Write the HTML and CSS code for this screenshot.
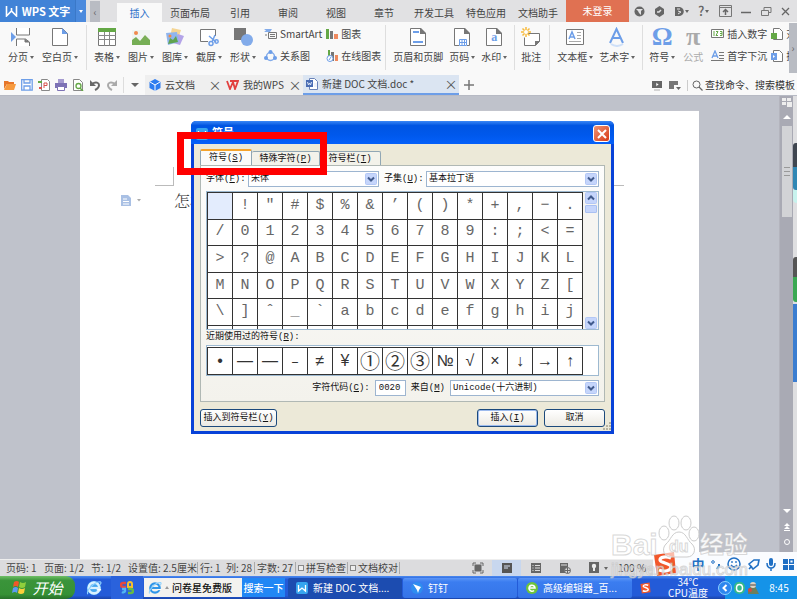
FILE: index.html
```
<!DOCTYPE html>
<html lang="zh-CN">
<head>
<meta charset="utf-8">
<title>WPS 文字</title>
<link rel="stylesheet" href="styles.css">
</head>
<body>
<svg width="0" height="0" class="defs" aria-hidden="true">
  <symbol id="page" viewBox="0 0 18 20"><path d="M1.500 1.500h10l5 5v12h-15z" fill="#fff" stroke="#777"/><path d="M11 1h1l5 5v1h-6z" fill="#777"/></symbol>
  <symbol id="wlogo" viewBox="0 0 12 12"><path d="M1 1v10l5-5 5 5V1M6 3v3" fill="none" stroke="#fff" stroke-width="1.600"/></symbol>
  <symbol id="chev" viewBox="0 0 12 12"><rect x=".5" y=".5" width="11" height="11" rx="1" fill="#c5d5fb" stroke="#b3c7f5"/><path d="M3 4.500l3 3 3-3" fill="none" stroke="#405a8c" stroke-width="2"/></symbol>
  <symbol id="ie" viewBox="0 0 18 18"><circle cx="9" cy="9" r="6" fill="none" stroke="currentColor" stroke-width="3"/><path d="M4 9h11" stroke="currentColor" stroke-width="2.500"/><path d="M12 11h5" stroke="#fff" stroke-width="1.500"/><path d="M2 16C0 12 9 2 16 2c2 1 0 3-1 4" fill="none" stroke="#8ed2ff" stroke-width="1.300"/></symbol>
  <symbol id="sogou" viewBox="0 0 24 24"><path d="M1 3l20-3 2 21-19 3z" fill="#f2572b"/><path d="M18 6C13 4 7 5 7 8s11 3 11 7-7 5-12 3" fill="none" stroke="#fff" stroke-width="3.200"/></symbol>
</svg>
<div class="app">
  <header class="titlebar">
    <button class="brand"><svg width="13" height="12"><use href="#wlogo"/></svg><b>WPS 文字</b></button>
    <button class="brand-more" aria-label="菜单"><i class="caret"></i></button>
    <button class="tabs-back" aria-label="向左">‹</button>
    <nav class="tabs">
      <a href="#" class="active">插入</a><a href="#" class="wide">页面布局</a><a href="#">引用</a><a href="#">审阅</a><a href="#">视图</a><a href="#">章节</a><a href="#" class="wide">开发工具</a><a href="#" class="wide">特色应用</a><a href="#" class="wide">文档助手</a>
    </nav>
    <button class="login">未登录</button>
    <div class="winbtns">
      <button aria-label="皮肤"><svg width="11" height="11" viewBox="0 0 11 11"><circle cx="5.500" cy="5.500" r="5" fill="#666"/><path d="M2 3h7L7 5v4L5 7 4 5z" fill="#e1e1e3"/></svg></button>
      <button aria-label="设置"><svg width="11" height="11" viewBox="0 0 11 11"><path d="M5.500 0l4.500 3v5l-4.500 3L1 8V3z" fill="#666"/><path d="M3 6h2l2-2" stroke="#e1e1e3" fill="none" stroke-width="1.500"/></svg></button>
      <button aria-label="文档"><svg width="9" height="11" viewBox="0 0 9 11"><path d="M0 1h5c5 1 5 8 0 9H0z" fill="#666"/><path d="M2 3h3M3 5l3 1-3 2" stroke="#e1e1e3" fill="none"/></svg><i class="caret"></i></button>
      <button class="help" aria-label="帮助">?<i class="caret"></i></button>
      <button aria-label="折叠"><svg width="13" height="12" viewBox="0 0 13 12"><path d="M.5.5h12v11H.5zM1 2.500h11" fill="none" stroke="#777"/><path d="M6.500 10V5M4 7l2.500-2.500L9 7" fill="none" stroke="#666" stroke-width="1.500"/></svg></button>
      <button aria-label="最小化"><svg width="10" height="11" viewBox="0 0 10 11"><path d="M0 6.500h10" stroke="#666" stroke-width="1.500"/></svg></button>
      <button aria-label="还原"><svg width="11" height="11" viewBox="0 0 11 11"><path d="M.5 4.500h7v5h-7zM3 4V1.500h7v5H8" fill="none" stroke="#777"/></svg></button>
      <button aria-label="关闭"><svg width="9" height="11" viewBox="0 0 9 11"><path d="M1 2l7 7M8 2L1 9" stroke="#666" stroke-width="1.300"/></svg></button>
    </div>
  </header>

  <section class="ribbon">
    <div class="group">
      <button class="big"><svg width="20" height="20" viewBox="0 0 20 20"><path d="M5.500 1v7h13V1M5.500 19v-7h9l4 3v4" fill="#fff" stroke="#777"/><path d="M14 12v3h4" fill="#777" stroke="#777"/><path d="M0 5l5 5-5 5z" fill="#6d9ee8"/></svg><span>分页<i class="caret"></i></span></button>
      <button class="big"><svg width="18" height="20" viewBox="0 0 18 20"><path d="M1.500 1.500h10l5 5v12h-15z" fill="#fff" stroke="#777"/><path d="M11 1l6 6h-6z" fill="#6d9ee8"/></svg><span>空白页<i class="caret"></i></span></button>
    </div>
    <div class="group">
      <button class="big"><svg width="20" height="20" viewBox="0 0 20 20"><path d="M1.500 1.500h17v17h-17z" fill="#fff" stroke="#777"/><path d="M1 1h18v4H1z" fill="#64a846"/><path d="M1 8.500h18M1 12.500h18M7.500 5v14M12.500 5v14" stroke="#888"/></svg><span>表格<i class="caret"></i></span></button>
      <button class="big"><svg width="20" height="20" viewBox="0 0 20 20"><path d="M1 3h18v15H1z" fill="#eef5f2"/><circle cx="5" cy="6" r="2" fill="#ef8a4f"/><path d="M1 18v-5l4-3 4 4 5-6 5 5v5z" fill="#76ae55"/></svg><span>图片<i class="caret"></i></span></button>
      <button class="big"><svg width="20" height="20" viewBox="0 0 20 20"><path d="M7 1l9 2-3 9-8-2z" fill="#f4d594"/><path d="M13 7l6 2-4 9-7-2z" fill="#b4a4e8"/><path d="M1 6l11-1 2 10-11 3z" fill="#8fb5ee"/><path d="M3 17l2-6 3 2 3-4 2 6z" fill="#60a34f"/><circle cx="5" cy="9" r="1.500" fill="#f48a42"/></svg><span>图库<i class="caret"></i></span></button>
      <button class="big"><svg width="20" height="20" viewBox="0 0 20 20"><path d="M9 14.500H1.500v-12h15V9" fill="#fff" stroke="#777"/><path d="M10 9l7 6M16 8l-3 7" stroke="#6d9ee8" stroke-width="1.500"/><circle cx="12" cy="16.500" r="2" fill="none" stroke="#6d9ee8" stroke-width="1.500"/><circle cx="17.500" cy="14.500" r="1.700" fill="none" stroke="#6d9ee8" stroke-width="1.500"/></svg><span>截屏<i class="caret"></i></span></button>
      <button class="big"><svg width="20" height="20" viewBox="0 0 20 20"><path d="M1 1h12v12H1z" fill="#777"/><circle cx="14" cy="13" r="6" fill="#82abea"/></svg><span>形状<i class="caret"></i></span></button>
      <div class="pair">
        <button><svg width="13" height="12" viewBox="0 0 13 12"><path d="M0 1h8L6 4H0l2-1.500z" fill="#82abea"/><path d="M4.500 4.500h8v6h-8zM6 6.500h5M6 8.500h5M1 7h2" fill="none" stroke="#777"/></svg>SmartArt</button>
        <button><svg width="13" height="12" viewBox="0 0 13 12"><circle cx="6.500" cy="6.500" r="4" fill="none" stroke="#82abea" stroke-width="1.500"/><circle cx="6.500" cy="2" r="2" fill="#6d9ee8"/><circle cx="2" cy="8" r="2" fill="#6d9ee8"/><circle cx="11" cy="8" r="2" fill="#6d9ee8"/></svg>关系图</button>
      </div>
      <div class="pair">
        <button><svg width="12" height="12" viewBox="0 0 12 12"><path d="M0 1h3v10H0z" fill="#64a846"/><path d="M4 3h3v8H4z" fill="#777"/><path d="M8 6h4v5H8z" fill="#ef8a5f"/></svg>图表</button>
        <button><svg width="12" height="12" viewBox="0 0 12 12"><path d="M2 0h2v6H2z" fill="#64a846"/><path d="M5 2h3v9H5z" fill="#777"/><path d="M9 5h3v6H9z" fill="#ef8a5f"/><circle cx="4" cy="8.500" r="3" fill="#fff" stroke="#6d9ee8"/><path d="M3 10l2-3" stroke="#6d9ee8"/></svg>在线图表</button>
      </div>
    </div>
    <div class="group tight">
      <button class="big"><svg width="18" height="20" viewBox="0 0 18 20"><use href="#page"/><path d="M4 5h6M4 15h10" stroke="#6d9ee8" stroke-width="2"/></svg><span>页眉和页脚</span></button>
      <button class="big"><svg width="18" height="20" viewBox="0 0 18 20"><use href="#page"/><path d="M6 12h8v7H6z" fill="#fff"/><path d="M6.500 12.500h7v6h-7zM6 15.500h8M9 12v7M11.500 12v7" fill="none" stroke="#6d9ee8"/></svg><span>页码<i class="caret"></i></span></button>
      <button class="big"><span class="on-page"><svg width="18" height="20"><use href="#page"/></svg><b>a</b></span><span>水印<i class="caret"></i></span></button>
    </div>
    <div class="group">
      <button class="big"><svg width="20" height="20" viewBox="0 0 20 20"><path d="M4 6.500h14.500v8l-4 4H3.500v-8" fill="#fff" stroke="#777"/><path d="M14 19v-5h5z" fill="#777"/><path d="M5 0v10M0 5h10M1.500 1.500l7 7M8.500 1.500l-7 7" stroke="#f7bb3e" stroke-width="1.500"/><circle cx="5" cy="5" r="2" fill="#fff"/></svg><span>批注</span></button>
    </div>
    <div class="group tight">
      <button class="big"><svg width="20" height="20" viewBox="0 0 20 20"><path d="M1.500 2.500h17v15h-17z" fill="#fff" stroke="#777"/><path d="M4 12l3-7 3 7M5 10h4" stroke="#6d9ee8" stroke-width="1.500" fill="none"/><path d="M12 5.500h4M12 8.500h4M12 11.500h4M4 14.500h12" stroke="#aaa"/></svg><span>文本框<i class="caret"></i></span></button>
      <button class="big"><svg width="20" height="20" viewBox="0 0 20 20"><path d="M3 16L9.500 2 16 16M5 11h9" stroke="#6d9ee8" stroke-width="2" fill="none"/><path d="M4 17q6 4 12 0" stroke="#cfe0f8" stroke-width="2" fill="none"/></svg><span>艺术字<i class="caret"></i></span></button>
    </div>
    <div class="group last">
      <button class="big"><b class="glyph omega">Ω</b><span>符号<i class="caret"></i></span></button>
      <button class="big disabled"><b class="glyph">π</b><span>公式</span></button>
      <div class="pair">
        <button><svg width="13" height="12" viewBox="0 0 13 12"><path d="M.5 1.500h12v8H.5z" fill="#fff" stroke="#777"/><path d="M3 3v5M5 3.500h2L5 7.500h2M9 3.500h2v4H9M9 5.500h2" stroke="#64a846" fill="none"/></svg>插入数字</button>
        <button><svg width="13" height="12" viewBox="0 0 13 12"><path d="M1 8l3-7 3 7M2 6h4" stroke="#6d9ee8" stroke-width="1.300" fill="none"/><path d="M8 2.500h5M8 5.500h5M8 8.500h5M0 10.500h13" stroke="#777"/></svg>首字下沉</button>
      </div>
      <div class="pair">
        <button><svg width="12" height="12" viewBox="0 0 12 12"><path d="M2.500.500h6l3 3v8h-9z" fill="#fff" stroke="#777"/><path d="M0 5h6v6H0z" fill="#64a846"/></svg>对</button>
        <button><svg width="12" height="12" viewBox="0 0 12 12"><path d="M2.500.500h6l3 3v8h-9z" fill="#fff" stroke="#777"/><path d="M0 3h6v7H0z" fill="#6d9ee8"/><path d="M2 5l2 1.500L2 8z" fill="#fff"/></svg>插</button>
      </div>
    </div>
    <button class="ribbon-next" aria-label="向右">›</button>
  </section>

  <section class="docbar">
    <div class="quick">
      <button aria-label="打开"><svg width="12" height="12" viewBox="0 0 12 12"><path d="M0 2h4l1 1h5v2H3L0 10z" fill="#e6762a"/><path d="M3 5h9l-2 6H0z" fill="#f79a3e"/></svg></button>
      <button aria-label="保存"><svg width="12" height="12" viewBox="0 0 12 12"><path d="M.7.7h10.500v10.500H.7zM3 1v3h6V1M3 11V7h6v4" fill="#fff" stroke="#6d9ee8" stroke-width="1.300"/></svg></button>
      <button aria-label="输出为PDF"><svg width="12" height="12" viewBox="0 0 12 12"><path d="M3.500.500h6l2 2v9h-8z" fill="#fff" stroke="#888"/><path d="M6 9V4h3v2.500H6" fill="none" stroke="#d9534f"/><path d="M0 2h4v2H0z" fill="#64a846"/><path d="M4 8H1v2h3" fill="#d9534f"/></svg></button>
      <button aria-label="打印"><svg width="12" height="12" viewBox="0 0 12 12"><path d="M3 0h6v4H3z" fill="#a59bd0"/><path d="M0 4h12v5H0z" fill="#7d72b5"/><path d="M2.500 7.500h7v4h-7z" fill="#fff" stroke="#7d72b5"/></svg></button>
      <button aria-label="打印预览"><svg width="12" height="12" viewBox="0 0 12 12"><path d="M1.500.500h6l3 3v8h-9z" fill="#fff" stroke="#888"/><circle cx="6.500" cy="7" r="2.500" fill="#fff" stroke="#64a846" stroke-width="1.300"/><path d="M8 9l3 3" stroke="#64a846" stroke-width="1.500"/></svg></button>
      <button aria-label="撤销"><svg width="12" height="12" viewBox="0 0 12 12"><path d="M3 5c4-3 7-1 7 1S8 10 6 11" fill="none" stroke="#666" stroke-width="2"/><path d="M1 1v6h6z" fill="#666"/></svg></button>
      <button aria-label="恢复"><svg width="12" height="12" viewBox="0 0 12 12"><path d="M9 5C5 2 2 4 2 6s2 4 4 5" fill="none" stroke="#aaa" stroke-width="2"/><path d="M11 1v6H5z" fill="#aaa"/></svg></button>
    </div>
    <button class="more" aria-label="更多"><i class="caret big-caret"></i></button>
    <div class="doctabs">
      <div class="doctab cloud"><svg width="12" height="12" viewBox="0 0 12 12"><path d="M6 0l5.500 3v6L6 12 .5 9V3z" fill="#2f7df0"/><path d="M1 3l5 3 5-3M6 6v6" stroke="#fff" fill="none"/></svg><a href="#">云文档</a><button aria-label="关闭">×</button></div>
      <div class="doctab mine"><svg width="13" height="10" viewBox="0 0 13 10"><path d="M1 1l3 8 3-7 2 7 3-8H4" fill="none" stroke="#e2403f" stroke-width="1.800"/></svg><a href="#">我的WPS</a><button aria-label="关闭">×</button></div>
      <div class="doctab current"><svg width="12" height="12" viewBox="0 0 12 12"><path d="M3.500.500h5l3 3v8h-8z" fill="#fff" stroke="#6a83b8"/><path d="M0 2h7v7H0z" fill="#4a6db4"/><path d="M1.500 4l1 3 1-2 1 2 1-3M8 6h3M8 8h3" fill="none" stroke="#dfe7f5"/></svg><a href="#">新建 DOC 文档.doc *</a><button aria-label="关闭">×</button></div>
    </div>
    <button class="plus" aria-label="新建"><svg width="10" height="10" viewBox="0 0 10 10"><path d="M5 0v10M0 5h10" stroke="#777" stroke-width="1.500"/></svg></button>
    <div class="search">
      <svg width="11" height="11" viewBox="0 0 11 11"><path d="M0 1h10v7H0z" fill="#666"/><path d="M4 2.500l3 2-3 2zM2 10h6" fill="#fff" stroke="#666" stroke-width=".5"/></svg>
      <svg width="12" height="11" viewBox="0 0 12 11"><path d="M0 1h9v4H5v4H0z" fill="#777"/><path d="M7 7h5l-2.500 3z" fill="#666"/></svg>
      <label for="find"><svg width="11" height="11" viewBox="0 0 11 11"><circle cx="4.500" cy="4.500" r="3.500" fill="none" stroke="#666"/><path d="M7 7l3.500 3.500" stroke="#666" stroke-width="1.300"/></svg></label>
      <input id="find" placeholder="查找命令、搜索模板">
    </div>
  </section>

  <main class="workspace">
    <article class="paper">
      <i class="corner left"></i><i class="corner right"></i>
      <svg class="para" width="22" height="13" viewBox="0 0 22 13"><path d="M1 1h7l3 3v8H1z" fill="#a9c0e4"/><path d="M3 5h4M3 7.500h6M3 10h6" stroke="#fff"/><path d="M17 5h4l-2 2.500z" fill="#aaa"/></svg>
      <p>怎样</p>
    </article>
    <div class="scroll">
      <svg width="10" height="9" viewBox="0 0 10 9"><path d="M0 0h4v3H0zM5 0h4v3H5zM0 4h4v3H0zM5 4h5v5H5z" fill="#eee"/></svg>
      <svg width="8" height="5" viewBox="0 0 8 5"><path d="M0 5l4-4 4 4z" fill="#fff"/></svg>
      <div class="thumb"><i></i><i></i><i></i></div>
      <svg class="nav" width="8" height="52" viewBox="0 0 8 52"><path d="M0 2h8L4 6zM4 16l3 3H1zM4 19l3 3H1zM1 23h6v1H1zM0 48h8l-4 3zM0 46h8v1H0z" fill="#fff"/><circle cx="4" cy="35" r="2.500" fill="none" stroke="#fff"/></svg>
    </div>
    <div class="edge"><i class="meter blue"></i><i class="drop"></i><i class="meter green"></i><i class="handle"></i></div>
  </main>

  <footer class="status">
    <span class="s1">页码: 1</span><span class="s2">页面: 1/2</span><span class="s3">节: 1/2</span><span class="s4 bar">设置值: 2.5厘米</span><span class="s5">行: 1</span><span class="s6 bar">列: 28</span><span class="s7 bar">字数: 27</span>
    <label class="bar"><input type="checkbox">拼写检查</label><label class="bar"><input type="checkbox">文档校对</label>
    <div class="views">
      <button aria-label="全屏"><svg width="12" height="12" viewBox="0 0 12 12"><path d="M2.500 2.500h7v7h-7z" fill="#666"/><path d="M1 4V1h3M8 1h3v3M11 8v3H8M4 11H1V8" fill="none" stroke="#666"/></svg></button>
      <button class="on" aria-label="页面"><svg width="12" height="12" viewBox="0 0 12 12"><path d="M1 1h10v10H1z" fill="#555"/><path d="M3 4h6M3 6h4" stroke="#d5e0f2"/></svg></button>
      <button aria-label="大纲"><svg width="12" height="12" viewBox="0 0 12 12"><path d="M1 1h10v10H1z" fill="#666"/><path d="M2.500 3.500h1M5 3.500h5M2.500 6h1M5 6h5M2.500 8.500h1M5 8.500h5" stroke="#ddd"/></svg></button>
      <button aria-label="Web"><svg width="12" height="12" viewBox="0 0 12 12"><path d="M1 1h8v10H1z" fill="#666"/><path d="M2 3h6" stroke="#ddd"/><circle cx="8.500" cy="8.500" r="3" fill="#ddd" stroke="#666"/><path d="M8.500 6v5M6 8.500h5" stroke="#666"/></svg></button>
      <button aria-label="护眼"><svg width="12" height="12" viewBox="0 0 12 12"><path d="M1 0h10v11H1z" fill="#666"/><circle cx="6" cy="4" r="2.200" fill="#eee"/><path d="M5 6h2v3H5z" fill="#eee"/></svg></button>
    </div>
    <i class="caret"></i><span class="zoom">100 %</span>
  </footer>

  <footer class="taskbar">
    <button class="start"><svg width="16" height="15" viewBox="0 0 16 15"><path d="M2 2q3-2 5 0L6 7Q4 5 1 7z" fill="#f0582a"/><path d="M8 2q3 2 6 0l-1 5q-3 2-6 0z" fill="#8fcf3c"/><path d="M1 8q3-2 5 0l-1 5q-2-2-5 0z" fill="#5b9bf5"/><path d="M7 8q3 2 6 0l-1 5q-3 2-6 0z" fill="#fbd03a"/></svg>开始</button>
    <button class="launch" aria-label="IE"><svg width="16" height="16" viewBox="0 0 18 18" color="#d9f1ff"><circle cx="9" cy="9" r="8" fill="#45a6ee"/><use href="#ie"/></svg></button>
    <button class="launch second" aria-label="程序"><svg width="14" height="14" viewBox="0 0 14 14"><path d="M6 2H3a2 2 0 0 0 0 4h3" fill="none" stroke="#e8483b" stroke-width="2.500"/><path d="M8 6V3a2 2 0 0 1 4 0v3z" fill="none" stroke="#f6c02d" stroke-width="2"/><path d="M2 8h3v2a2 2 0 0 1-3 1" fill="none" stroke="#51b6f2" stroke-width="2.300"/><path d="M8 8h3a2 2 0 0 1 0 4H8" fill="none" stroke="#66bb45" stroke-width="2.500"/></svg></button>
    <div class="ask"><svg width="14" height="14" viewBox="0 0 18 18" color="#2f95e8"><use href="#ie"/></svg><i class="up"></i><input aria-label="搜索" value="问卷星免费版"></div>
    <button class="go">搜索一下</button>
    <button class="task pressed"><svg width="12" height="12" viewBox="0 0 12 12"><rect width="12" height="12" rx="2" fill="#36a4ef"/><path d="M2.500 3v6L6 6l3.500 3V3" fill="none" stroke="#fff" stroke-width="1.300"/></svg>新建 DOC 文档....</button>
    <button class="task"><svg width="12" height="12" viewBox="0 0 12 12"><circle cx="6" cy="6" r="6" fill="#2e8df0"/><path d="M2 2l8 3-2 3-1 3-1-3z" fill="#fff"/></svg>钉钉</button>
    <button class="task"><svg width="12" height="12" viewBox="0 0 12 12"><circle cx="6" cy="6" r="6" fill="#6ec43a"/><path d="M3 6h6a3 3 0 1 0-1 2.500" fill="none" stroke="#fff" stroke-width="1.600"/></svg>高级编辑器_百...</button>
    <svg class="tray-s" width="11" height="12"><use href="#sogou"/></svg>
    <div class="temp">34℃<br>CPU温度</div>
    <div class="tray">
      <svg width="14" height="14" viewBox="0 0 14 14"><circle cx="7" cy="7" r="6.500" fill="#2c86ee" stroke="#8fd0ff"/><path d="M8.500 4l-3 3 3 3" fill="none" stroke="#fff" stroke-width="2"/></svg>
      <svg width="11" height="12" viewBox="0 0 11 12"><rect width="11" height="12" rx="5" fill="#37b98a"/><ellipse cx="5.500" cy="6" rx="3" ry="3.500" fill="none" stroke="#fff" stroke-width="1.500"/></svg>
      <svg width="12" height="12" viewBox="0 0 12 12"><path d="M1 12V8l3-4h4l4 8z" fill="#6b7f5c"/><circle cx="6" cy="3" r="3" fill="#e0d3c6"/><path d="M3 3h6" stroke="#444"/><circle cx="3" cy="8" r="2" fill="#d54b40"/></svg>
      <time>8:45</time>
    </div>
  </footer>

  <section class="dialog" role="dialog" aria-label="符号">
    <div class="caption"><svg width="12" height="12" viewBox="0 0 12 12"><rect width="12" height="12" rx="2" fill="#36a4ef"/><path d="M2.500 3v6L6 6l3.500 3V3" fill="none" stroke="#fff" stroke-width="1.300"/></svg><b>符号</b><button aria-label="关闭"><svg width="10" height="10" viewBox="0 0 10 10"><path d="M1 1l8 8M9 1L1 9" stroke="#fff" stroke-width="2"/></svg></button></div>
    <div class="dlg-body">
      <div class="dlg-tabs"><button class="sel">符号(<u>S</u>)</button><button class="special">特殊字符(<u>P</u>)</button><button>符号栏(<u>T</u>)</button></div>
      <div class="panel">
        <div class="row">
          <label for="font">字体(<u>F</u>):</label><div class="combo font"><select id="font"><option>宋体</option></select><svg width="12" height="12"><use href="#chev"/></svg></div>
          <label for="sub">子集(<u>U</u>):</label><div class="combo grow"><select id="sub"><option>基本拉丁语</option></select><svg width="12" height="12"><use href="#chev"/></svg></div>
        </div>
        <div class="box chars">
          <table>
            <tr><td class="pick"><td>!<td>″<td>#<td>$<td>%<td>&amp;<td>’<td>(<td>)<td>*<td>+<td>,<td>−<td>.
            <tr><td>/<td>0<td>1<td>2<td>3<td>4<td>5<td>6<td>7<td>8<td>9<td>:<td>;<td>&lt;<td>=
            <tr><td>&gt;<td>?<td>@<td>A<td>B<td>C<td>D<td>E<td>F<td>G<td>H<td>I<td>J<td>K<td>L
            <tr><td>M<td>N<td>O<td>P<td>Q<td>R<td>S<td>T<td>U<td>V<td>W<td>X<td>Y<td>Z<td>[
            <tr><td>\<td>]<td>ˆ<td>_<td>`<td>a<td>b<td>c<td>d<td>e<td>f<td>g<td>h<td>i<td>j
          </table>
          <div class="stubs"><i></i><i></i><i></i><i></i><i></i><i></i><i></i><i></i><i></i><i></i><i></i><i></i><i></i><i></i><i></i></div>
          <div class="vbar"><svg class="flip" width="12" height="12"><use href="#chev"/></svg><i></i><svg class="down" width="12" height="12"><use href="#chev"/></svg></div>
        </div>
        <div class="recent-title">近期使用过的符号(<u>R</u>):</div>
        <div class="box recent">
          <table><tr><td>•<td>—<td>—<td>﹣<td>≠<td>¥<td class="ring">①<td class="ring">②<td class="ring">③<td>№<td>√<td>×<td>↓<td>→<td>↑</table>
        </div>
        <div class="row code">
          <label for="code">字符代码(<u>C</u>):</label><input id="code" value="0020">
          <label for="from">来自(<u>M</u>)</label><div class="combo from"><select id="from"><option>Unicode(十六进制)</option></select><svg width="12" height="12"><use href="#chev"/></svg></div>
        </div>
      </div>
      <div class="actions"><button class="bar-btn">插入到符号栏(<u>Y</u>)</button><button class="primary">插入(<u>I</u>)</button><button>取消</button></div>
    </div>
    <svg class="grip" width="9" height="9" viewBox="0 0 9 9"><path d="M7 0h2v2H7zM7 3h2v2H7zM7 6h2v2H7zM4 3h2v2H4zM4 6h2v2H4zM1 6h2v2H1z" fill="#b8b4a2"/></svg>
  </section>
  <div class="mark"></div>

  <div class="ime">
    <svg width="24" height="24"><use href="#sogou"/></svg>
    <b>中</b>
    <svg width="10" height="12" viewBox="0 0 10 12"><circle cx="2" cy="4" r="1.300" fill="none" stroke="#1f6fc4"/><path d="M8 6v2l-2 3" stroke="#1f6fc4" stroke-width="2" fill="none"/></svg>
    <svg width="14" height="14" viewBox="0 0 14 14"><circle cx="7" cy="7" r="6" fill="none" stroke="#1f6fc4" stroke-width="1.500"/><path d="M4 8q3 4 6 0M5 4v2M9 4v2" stroke="#1f6fc4" stroke-width="1.300" fill="none"/></svg>
    <svg width="12" height="12" viewBox="0 0 12 12"><path d="M1 6l5-4 5 0-1 5-5 4zM1 11l3-3" fill="none" stroke="#1f6fc4" stroke-width="1.600"/></svg>
    <svg width="10" height="13" viewBox="0 0 10 13"><rect x="3" width="4" height="8" rx="2" fill="#1f6fc4"/><path d="M1 5q0 5 4 5t4-5M5 10v3" fill="none" stroke="#1f6fc4" stroke-width="1.500"/></svg>
    <svg width="11" height="11" viewBox="0 0 11 11"><path d="M0 0h5v5H0zM0 6h5v5H0zM6 6h5v5H6z" fill="#1f6fc4"/><path d="M6.700.700h3.600v3.600H6.700z" fill="none" stroke="#1f6fc4" stroke-width="1.400"/></svg>
  </div>

  <div class="watermark" aria-hidden="true">
    <div class="wm-top"><span>Bai</span><span class="paw"><svg width="42" height="44" viewBox="0 0 42 44"><g fill="#fff" fill-opacity=".6" stroke="#ccc"><ellipse cx="16" cy="8" rx="5" ry="7"/><ellipse cx="28" cy="8" rx="5" ry="7"/><ellipse cx="6" cy="18" rx="5" ry="7"/><ellipse cx="36" cy="19" rx="5" ry="7"/><path d="M21 17c7 0 8 8 13 12 5 5 2 13-5 13H13C6 42 3 34 8 29c5-4 6-12 13-12z"/></g></svg><small>du</small></span><span class="wm-cn">经验</span></div>
    <div class="wm-url">jingyan.baidu.com</div>
  </div>
</div>
</body>
</html>
```
FILE: styles.css
```
* { box-sizing: border-box; }
body { margin: 0; font: 10px/14px "Noto Sans CJK SC", "Liberation Sans", sans-serif; color: #444; }
button, input, select { font: inherit; color: inherit; border: 0; padding: 0; margin: 0; background: none; }
button { display: flex; align-items: center; justify-content: center; white-space: nowrap; }
a { color: inherit; text-decoration: none; }
svg { flex: none; display: block; }
.defs { position: absolute; }
.app { position: relative; display: flex; flex-direction: column; height: 100vh; overflow: hidden; }
.caret { display: inline-block; flex: none; border: 2px solid transparent; border-top: 3px solid #666; border-bottom: 0; margin-left: 2px; }

.titlebar { display: flex; height: 22px; background: #e1e1e3; flex: none; }
.brand { width: 75px; gap: 4px; background: #4183d7; color: #fff; font-size: 11px; }
.brand b { font-weight: 700; }
.brand-more { width: 11px; background: #4b8add; border-left: 1px solid #3a78c8; }
.brand-more .caret { border-top-color: #fff; margin: 0; }
.tabs-back { width: 10px; margin: 1px 17px 0 4px; background: #b9bcc3; color: #666; }
.tabs { display: flex; margin-right: 2px; }
.tabs a { width: 48px; text-align: center; line-height: 26px; }
.tabs .wide { width: 52px; }
.tabs .active { width: 45px; margin: 3px 2px 0 0; background: #f9f9f9; color: #2b6fca; line-height: 20px; }
.login { width: 63px; background: #e07152; color: #fff; }
.winbtns { display: flex; flex: 1; justify-content: space-between; padding: 0 7px 0 5px; }
.help { font-size: 13px; font-weight: 500; color: #666; }
.winbtns .caret { margin-left: 1px; }

.ribbon { display: flex; height: 53px; padding-left: 8px; background: #f9f9f9; flex: none; overflow: hidden; }
.group { display: flex; gap: 8px; padding-right: 8px; margin: 3px 7px 5px 0; border-right: 1px solid #dedede; flex: none; }
.group.tight { gap: 6px; padding-right: 7px; margin-right: 6px; }
.group.last { border: 0; flex: 1 1 0; min-width: 0; overflow: hidden; margin-right: 0; padding: 0; }
.big { flex-direction: column; justify-content: flex-start; gap: 3px; padding-top: 2px; }
.big > span { display: flex; align-items: center; line-height: 14px; }
.pair { display: flex; flex-direction: column; gap: 8px; padding-top: 2px; margin-right: -4px; }
.pair button { gap: 3px; justify-content: flex-start; }
.big .on-page { display: grid; height: 20px; }
.on-page > * { grid-area: 1 / 1; }
.on-page b { color: #6d9ee8; font: bold 12px/20px "Liberation Serif", serif; text-align: center; }
.glyph { font: bold 26px/20px "Liberation Serif", serif; height: 20px; }
.omega { color: #6d9ee8; }
.disabled { color: #aaa; }
.ribbon-next { width: 8px; margin: 1px 0 2px; background: #b9bcc3; color: #666; }

.docbar { display: flex; height: 20px; background: #f9f9f9; flex: none; align-items: stretch; }
.quick { display: flex; gap: 5px; padding: 0 5px 0 4px; border-right: 1px solid #ddd; margin: 2px 0; }
.more { width: 21px; }
.big-caret { border-width: 4px 4px 0; margin: 0; }
.doctabs { display: flex; }
.doctab { display: flex; align-items: center; gap: 4px; background: #efefef; padding: 0 3px; }
.doctab button { margin-left: auto; font-size: 13px; width: 8px; color: #555; }
.cloud { width: 77px; padding-left: 4px; }
.mine { width: 81px; padding: 0 4px; }
.current { width: 156px; padding-right: 4px; background: #dbe5f2; border-bottom: 2px solid #6d9ee8; }
.plus { width: 20px; }
.search { display: flex; flex: 1; align-items: center; justify-content: flex-end; gap: 6px; }
.search label { border-left: 1px solid #ccc; padding-left: 4px; }
.search input { width: 92px; margin-left: -4px; }
.search input::placeholder { color: #333; opacity: 1; }

.workspace { display: flex; flex: 1; background: #bfc2cb; padding-left: 80px; min-height: 0; border-top: 1px solid #b7bac4; }
.paper { position: relative; flex: 1; margin: 14px 80px 0 0; background: #fff; border-top: 1px solid #c3c5cd; }
.paper p { margin: 81px 0 0 94px; font: 16px/18px "Noto Serif CJK SC", "Noto Sans CJK SC", serif; font-weight: 300; color: #333; }
.corner { position: absolute; top: 56px; width: 19px; height: 19px; border-bottom: 1px solid #bbb; }
.left { left: 75px; border-right: 1px solid #bbb; }
.right { right: 75px; border-left: 1px solid #bbb; }
.para { position: absolute; left: 40px; top: 83px; }
.scroll { display: flex; flex-direction: column; align-items: center; width: 14px; background: #a9aab4; padding-top: 2px; gap: 7px; border-left: 1px solid #b3b4bd; }
.thumb { width: 10px; height: 91px; background: #d2d3d6; display: flex; flex-direction: column; gap: 3px; align-items: center; justify-content: center; }
.thumb i { width: 6px; height: 1px; background: #999; }
.nav { margin-top: auto; }
.edge { width: 4px; background: #dfdfe1; display: flex; flex-direction: column; }
.meter { height: 47px; background: #3f4650; margin-top: 47px; border-radius: 3px 0 0 3px; }
.blue { background: linear-gradient(#3f4650 50%, #3087b4 50%); }
.drop { height: 13px; background: #c8f3ee; border-radius: 0 0 0 4px; }
.green { height: 45px; margin-top: 54px; background: linear-gradient(#555 45%, #3aa852 45%); }
.handle { height: 78px; margin-top: 2px; background: #3b7dd0; }

.status { display: flex; align-items: center; height: 17px; background: #dcdcde; padding-left: 6px; flex: none; white-space: nowrap; border-top: 1px solid #eee; }
.s1 { width: 38px; } .s2 { width: 47px; } .s3 { width: 37px; } .s4 { width: 70px; } .s5 { width: 26px; } .s6 { width: 29px; } .s7 { width: 39px; }
.bar { border-right: 1px solid #aaa; line-height: 12px; margin-right: 2px; }
.status label { display: flex; align-items: center; gap: 2px; padding-right: 1px; }
.status input { appearance: none; width: 6px; height: 6px; border: 1px solid #888; background: #eee; }
.views { display: flex; margin-left: auto; align-self: stretch; }
.views button { width: 29px; }
.views .on { background: #c8d7ee; }
.zoom { width: 189px; padding-left: 10px; }
.status > .caret { margin-left: -4px; }

.taskbar { display: flex; height: 23px; flex: none; background: linear-gradient(#4b8bf0, #235bd8 15%, #235bd8 85%, #1a44a8); color: #fff; white-space: nowrap; }
.start { width: 75px; gap: 4px; background: linear-gradient(#6fbf66, #3a943a 20%, #369136 80%, #27702a); border-radius: 0 9px 9px 0; font-size: 15px; font-style: italic; }
.launch { width: 18px; margin-left: 10px; }
.launch.second { width: 32px; margin: 0 0 0 8px; background: #2a62dc; }
.ask { display: flex; align-items: center; gap: 3px; width: 98px; margin: 2px 0 2px 1px; padding-left: 4px; background: #f3f2ef; color: #111; }
.ask input { flex: 1; min-width: 0; font-weight: 500; }
.up { border: 2px solid transparent; border-bottom: 3px solid #999; border-top: 0; }
.go { width: 43px; margin: 2px 0; background: #2187f5; font-weight: 500; }
.task { flex: 0 1 114px; justify-content: flex-start; gap: 5px; margin: 2px 0 1px 1px; padding-left: 8px; background: linear-gradient(#5a95f6, #3b7df0 20%, #3574e8); border-radius: 2px; }
.pressed { background: #1c4cb0; margin-left: 3px; }
.tray-s { margin: 6px 0 0 8px; }
.temp { width: 74px; text-align: center; line-height: 11px; }
.tray { flex: 1; display: flex; align-items: center; gap: 2px; margin-left: -7px; background: linear-gradient(90deg, transparent 7px, #1593e8 7px); }
.tray time { margin: 0 auto; }

.dialog { position: absolute; left: 191px; top: 121px; width: 423px; padding: 0 3px 3px; background: #0842d8; border-radius: 5px 5px 0 0; color: #111; font: 9px/14px "Liberation Mono", "Noto Sans CJK SC", monospace; }
.caption { display: flex; align-items: center; gap: 4px; height: 23px; padding: 2px 4px 0 5px; margin: 0 -3px; border-radius: 5px 5px 0 0; background: linear-gradient(#3a87f5, #0055e2 20%, #0058ec 60%, #0460fa); color: #fff; }
.caption b { font-size: 11px; }
.caption button { width: 17px; height: 17px; margin-left: auto; background: linear-gradient(135deg, #ef9475, #d83a15); border: 1px solid #fff; border-radius: 3px; }
.dlg-body { background: #ece9d8; padding: 5px 6px 4px; }
.grip { position: absolute; right: 3px; bottom: 3px; }
.dlg-tabs { display: flex; align-items: flex-end; }
.dlg-tabs button { height: 14px; padding: 0 8px; background: #f3f2ea; border: 1px solid #91a7b4; border-bottom: 0; border-left: 0; border-radius: 2px 2px 0 0; width: 61px; }
.dlg-tabs .sel { height: 16px; width: 52px; border-left: 1px solid #91a7b4; border-top: 2px solid #f5a42c; background: #fbfbf9; }
.dlg-tabs .special { width: 68px; }
.panel { border: 1px solid #b0b8b4; padding: 5px 5px; background: linear-gradient(#fdfdfc, #f3f2ec); }
.row { display: flex; align-items: center; height: 16px; white-space: nowrap; }
.row label { width: 42px; }
.combo { display: flex; align-items: center; background: #fff; border: 1px solid #9db5d0; height: 16px; padding-right: 1px; }
.combo select { appearance: none; flex: 1; min-width: 0; height: 14px; padding-left: 2px; }
.combo.font { width: 131px; margin-right: 5px; }
.grow { flex: 1; }
.box { border: 1px solid #9db9d0; background: #fff; }
.chars { display: grid; grid-template-columns: 376px 1fr; grid-template-rows: 134px 3px; margin-top: 4px; height: 139px; }
table { border-collapse: collapse; table-layout: fixed; width: 376px; }
.chars table { height: 134px; }
td { border: 1px solid #333; padding: 0; text-align: center; color: #666; font-size: 15px; line-height: 20px; }
.pick { background: #e3ecfd; }
.stubs { grid-row: 2; display: grid; grid-template-columns: repeat(15, 25px); border-left: 1px solid #333; }
.stubs i { border-right: 1px solid #333; }
.vbar { grid-area: 1 / 2 / 3 / 3; display: flex; flex-direction: column; align-items: center; gap: 1px; background: #f6f5f1; }
.vbar i { width: 12px; height: 8px; background: #c5d5fb; border: 1px solid #a9c0f2; border-radius: 1px; }
.flip { transform: rotate(180deg); }
.down { margin-top: auto; }
.recent-title { line-height: 15px; }
.recent { height: 31px; padding-top: 1px; }
.recent table { height: 28px; }
.recent td { color: #333; font-family: "Liberation Sans", "Noto Sans CJK SC", sans-serif; font-size: 16px; line-height: 18px; }
.recent .ring { font-family: "Noto Sans CJK SC", sans-serif; font-size: 20px; }
.code { justify-content: flex-end; margin-top: 4px; }
.code label { width: auto; margin-right: 5px; }
.code input { width: 31px; height: 16px; margin-right: 5px; padding-left: 3px; background: #fff; border: 1px solid #9db5d0; }
.combo.from { width: 149px; }
.actions { display: flex; gap: 6px; margin-top: 7px; }
.actions button { width: 61px; height: 18px; border: 1px solid #1c4a7c; border-radius: 3px; background: linear-gradient(#fff, #eceae3); }
.actions .bar-btn { width: 77px; margin-right: auto; }
.actions .primary { box-shadow: inset 0 0 0 1px #9dbbee; }
.mark { position: absolute; left: 177px; top: 132px; width: 150px; height: 43px; border: 7px solid #f00; }

.ime { position: absolute; right: 0; bottom: 23px; width: 144px; height: 24px; display: flex; align-items: center; justify-content: space-between; padding-right: 3px; background: #fafcff; }
.ime b { font-size: 13px; color: #1f6fc4; margin-left: 8px; }
.watermark { position: absolute; right: 45px; bottom: 18px; width: 141px; color: rgba(255, 255, 255, .6); -webkit-text-stroke: 1px rgba(190, 190, 190, .6); font-family: "Liberation Sans", sans-serif; }
.wm-top { display: flex; align-items: flex-end; font-size: 30px; line-height: 28px; font-weight: bold; }
.paw { display: grid; }
.paw > * { grid-area: 1 / 1; }
.paw small { font-size: 16px; align-self: end; text-align: center; line-height: 24px; }
.wm-cn { font: bold 24px/32px "Noto Sans CJK SC", sans-serif; color: rgba(255, 255, 255, .9); }
.wm-url { font-size: 17px; line-height: 22px; }
```
